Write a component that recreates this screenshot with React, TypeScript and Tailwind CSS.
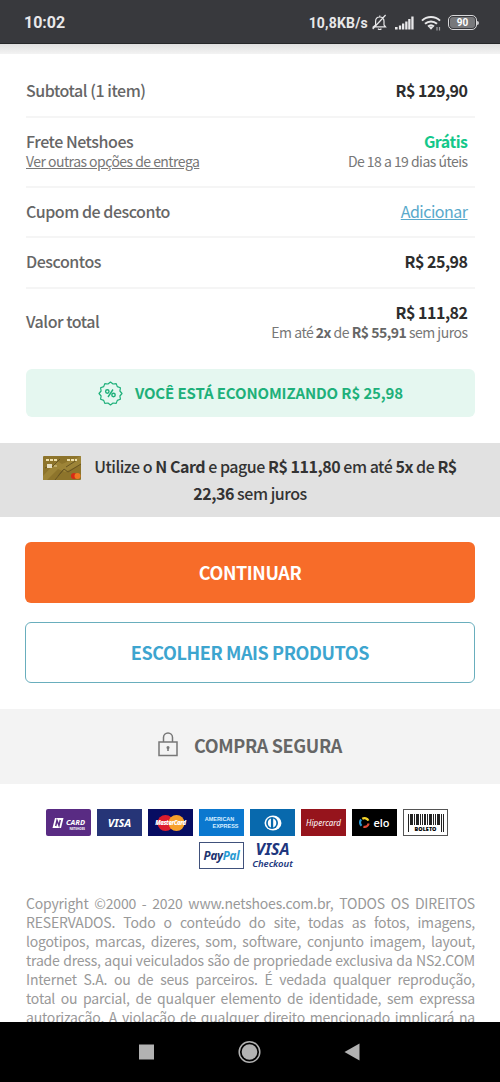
import React from 'react';

const sans = "font-['Noto_Sans_CJK_JP','Noto_Sans',sans-serif]";

const StatusBar: React.FC = () => (
  <header className="flex h-11 shrink-0 items-center justify-between border-b border-[#252729] bg-[#38393d] pl-6 pr-[21px] pt-[2px] font-[Roboto,sans-serif] text-[#e8e8ea]">
    <span className="text-base font-bold leading-none">10:02</span>
    <div className="flex items-center">
      <span className="mr-1 text-sm font-bold leading-none tracking-[0.2px]">10,8KB/s</span>
      <svg className="mr-2" width="15" height="17" viewBox="0 0 15 17" fill="none" stroke="currentColor" strokeWidth="1.2">
        <path d="M1.500 12.800h12L12 11V7.200C12 4.500 10.300 3 7.800 3S3.600 4.500 3.600 7.200V11L1.500 12.800zM7.800 3V1.500M6 14.600c.8 1.200 2.600 1.200 3.400 0M.700 15 13.600 1" />
      </svg>
      <svg className="mr-[7px]" width="19" height="14" viewBox="0 0 19 14" fill="currentColor">
        <path d="M0 11h2.600v2.500H0zM3.900 9.500h2.300v4H3.900zM7 7.500h2.300v6H7zM10.200 5.500h2.300v8h-2.300zM13.200 3h2.300v10.500h-2.300zM16.300 .500h2.300v13h-2.300z" />
      </svg>
      <svg className="mr-[7px]" width="20" height="16" viewBox="0 0 20 16" fill="none" stroke="currentColor" strokeWidth="2">
        <path d="M1 5.600c5-4.800 13-4.800 18 0M4 8.800c3.500-3.200 8.500-3.200 12 0M7 11.600c1.800-1.500 4.200-1.500 6 0" />
        <path d="m7.800 12.300 2.200 2.400 2.200-2.400c-1.200-.9-3.200-.9-4.400 0z" fill="currentColor" stroke="none" />
        <path d="M16 12v3.500M18.500 12v3.500" strokeWidth="1.200" opacity=".6" />
      </svg>
      <div className="flex items-center">
        <div className="flex h-[15px] w-[29px] items-center justify-center rounded-[5px] border-[1.500px] border-[#d8d8da] p-px">
          <span className="flex h-full w-full items-center justify-center rounded-[3px] bg-[#77787b] text-[10px] font-bold leading-none text-white">90</span>
        </div>
        <div className="h-1 w-[2px] rounded-r bg-[#c8c8ca]" />
      </div>
    </div>
  </header>
);

interface RowProps {
  label: string;
  className: string;
  note?: React.ReactNode;
  last?: boolean;
  children: React.ReactNode;
}

const Row: React.FC<RowProps> = ({ label, className, note, last, children }) => (
  <div className={`flex items-center justify-between pr-[7.500px] ${last ? '' : 'border-b-2 border-[#f5f5f5]'} ${className}`}>
    <div className={last ? 'pb-[2px]' : ''}>
      <div className="text-base font-medium leading-5 tracking-[-0.46px] text-[#666]">{label}</div>
      {note}
    </div>
    <div className="text-right text-base leading-5 tracking-[-0.5px]">{children}</div>
  </div>
);

const Summary: React.FC = () => (
  <section className="pl-[26px] pr-[25px] pt-[11px]">
    <Row label="Subtotal (1 item)" className="h-[53px] pb-[2px]">
      <b className="text-[#2d2d2d]">R$ 129,90</b>
    </Row>
    <Row
      label="Frete Netshoes"
      className="h-[70px] pb-[2px]"
      note={<a className="block text-sm leading-5 tracking-[-0.54px] text-[#777] underline">Ver outras opções de entrega</a>}
    >
      <b className="block text-[#14c88a]">Grátis</b>
      <span className="block text-sm leading-5 tracking-[-0.53px] text-[#777]">De 18 a 19 dias úteis</span>
    </Row>
    <Row label="Cupom de desconto" className="h-[50px] pb-[2px]">
      <a className="text-[#59a9cb] underline">Adicionar</a>
    </Row>
    <Row label="Descontos" className="h-[51px] pb-[4px]">
      <b className="text-[#2d2d2d]">R$ 25,98</b>
    </Row>
    <Row label="Valor total" className="h-[68px] pb-[3px]" last>
      <b className="block text-[#2d2d2d]">R$ 111,82</b>
      <span className="block text-sm leading-5 text-[#777]">
        Em até <b className="text-[#666]">2x</b> de <b className="text-[#666]">R$ 55,91</b> sem juros
      </span>
    </Row>
    <div className="mt-[12px] flex h-12 items-center justify-center rounded-md bg-[#e5f7f0] text-[#1eb07a]">
      <svg className="mr-3" width="25" height="25" viewBox="0 0 25 25" fill="none" stroke="currentColor" strokeWidth="1.200">
        <path d="M12.500 1 15 3 18.200 2.600 19.300 5.600 22.400 6.800 21.900 10 24 12.500 21.900 15 22.400 18.200 19.300 19.400 18.200 22.400 15 22 12.500 24 10 22 6.800 22.400 5.700 19.400 2.600 18.200 3.100 15 1 12.500 3.100 10 2.600 6.800 5.700 5.600 6.800 2.600 10 3z" strokeLinejoin="round" />
        <path d="M15 8.500l-5 7.500" strokeWidth="1.400" />
        <circle cx="9.300" cy="10.500" r="1.700" strokeWidth="1.400" />
        <circle cx="15.500" cy="14" r="1.700" strokeWidth="1.400" />
      </svg>
      <span className="pb-px text-[15px] font-bold leading-5 tracking-[-0.13px]">VOCÊ ESTÁ ECONOMIZANDO R$ 25,98</span>
    </div>
  </section>
);

const NCard: React.FC = () => (
  <svg className="mr-[13px] inline-block align-[-7px]" width="38" height="24" viewBox="0 0 38 24">
    <rect width="38" height="24" rx="1" fill="#8d742b" />
    <path d="M0 20 14 5l5 3L38 0v8L22 16l-7-3L4 24H0z" fill="#9d8437" />
    <path d="m12 24 9-11 4 3 13-8M8 12l9-9M23 11l11-7M2 12l7-3M15 20l5-6" stroke="#685522" fill="none" />
    <path d="M3 4h3M7 4h8M24 4h10" stroke="#eee0ae" strokeWidth="2" strokeDasharray="3 1" />
    <rect x="4" y="8" width="5" height="4" fill="#e6dec0" />
    <path d="M11 10h3" stroke="#ded098" />
    <circle cx="31" cy="20" r="3" fill="#d62b16" />
    <circle cx="34.500" cy="20" r="3" fill="#ef7821" />
  </svg>
);

const logo = 'flex h-[27px] w-[45px] items-center justify-center whitespace-nowrap leading-none';

const Payments: React.FC = () => (
  <div className="flex flex-wrap justify-center gap-x-[6px] gap-y-[6px] pl-[36px] pr-[42px] pt-[25px]">
    <div className={`${logo} gap-[2px] rounded-xs bg-[#592b83] text-white`}>
      <svg width="12" height="10" viewBox="0 0 11 10">
        <path d="M2.500 0H11L8.500 10H0z" fill="#fff" />
        <path d="M3.200 8 4.500 2.500 6.500 7.500 7.800 2" stroke="#592b83" strokeWidth="1.500" fill="none" />
      </svg>
      <div className="flex flex-col items-end pt-[3px]">
        <span className="font-['Noto_Sans',sans-serif] text-[7.500px] font-bold italic leading-[9px]">CARD</span>
        <span className="font-['Noto_Sans',sans-serif] text-[3px] font-bold leading-[4px]">NETSHOES</span>
      </div>
    </div>
    <div className={`${logo} bg-[#263577] font-['Noto_Sans',sans-serif] text-[11px] font-bold italic text-white`}>VISA</div>
    <div className={`${logo} relative bg-[#070d62]`}>
      <svg width="28" height="18" viewBox="0 0 28 18">
        <circle cx="8.500" cy="9" r="8" fill="#dc1c2c" />
        <circle cx="19.500" cy="9" r="8" fill="#f6a12b" />
      </svg>
      <span className="absolute font-['Open_Sans',sans-serif] text-[6px] font-extrabold italic tracking-[-0.400px] text-white">MasterCard</span>
    </div>
    <div className={`${logo} flex-col bg-[#0b78cf] font-['Liberation_Sans',sans-serif] text-[5.500px] font-bold text-[#d9efff]`}>
      <span className="mr-1 leading-[7px]">AMERICAN</span>
      <span className="ml-2 leading-[6px]">EXPRESS</span>
    </div>
    <div className={`${logo} bg-[#0869ad]`}>
      <svg width="18" height="16" viewBox="0 0 19 17">
        <ellipse cx="9.500" cy="8.500" rx="9" ry="8" fill="#fff" />
        <circle cx="8.500" cy="8.500" r="6.300" fill="#0869ad" />
        <path d="M7.300 3.800a5 5 0 0 0 0 9.400zM9.700 3.800a5 5 0 0 1 0 9.400z" fill="#fff" />
      </svg>
    </div>
    <div className={`${logo} bg-[#96141c] font-['Noto_Sans',sans-serif] text-[8px] italic text-white`}>Hipercard</div>
    <div className={`${logo} gap-[3px] bg-black font-['Open_Sans',sans-serif] text-[11px] font-semibold text-white`}>
      <svg width="11" height="11" viewBox="0 0 10 10" fill="none" strokeWidth="2">
        <path d="M3 1.600A4 4 0 0 1 8.600 3.300" stroke="#f5d52a" />
        <path d="M8.800 6A4 4 0 0 1 4 8.900" stroke="#df4936" />
        <path d="M2.300 8A4 4 0 0 1 2 2.300" stroke="#2998d5" />
      </svg>
      <span className="pb-px">elo</span>
    </div>
    <div className={`${logo} flex-col border border-[#555] bg-white font-['Noto_Sans',sans-serif] text-[5.500px] font-black text-black`}>
      <svg width="38" height="18" viewBox="0 0 38 18" fill="#222">
        <path d="M1 0h1v18H1zM3 0h3v11H3zM7 0h1v11H7zM9 0h3v11H9zM13 0h1v11h-1zM15 0h1v11h-1zM17 0h2v11h-2zM20 0h1v11h-1zM22 0h3v11h-3zM26 0h1v11h-1zM28 0h1v11h-1zM30 0h3v11h-3zM34 0h1v18h-1zM36 0h1v18h-1z" />
      </svg>
      <span className="-mt-[6px] leading-[6px]">BOLETO</span>
    </div>
    <div className={`${logo} border border-[#40517b] bg-white font-['Noto_Sans',sans-serif] text-[11.500px] font-bold italic tracking-[-0.2px] text-[#1d3470]`}>
      Pay<span className="text-[#299bd3]">Pal</span>
    </div>
    <div className={`${logo} flex-col font-['Noto_Sans',sans-serif] italic text-[#20367e]`}>
      <span className="text-[16px] font-bold leading-[15px]">VISA</span>
      <span className="text-[9.500px] font-semibold leading-[13px]">Checkout</span>
    </div>
  </div>
);

const legal = [
  'Copyright ©2000 - 2020 www.netshoes.com.br, TODOS OS DIREITOS',
  'RESERVADOS. Todo o conteúdo do site, todas as fotos, imagens,',
  'logotipos, marcas, dizeres, som, software, conjunto imagem, layout,',
  'trade dress, aqui veiculados são de propriedade exclusiva da NS2.COM',
  'Internet S.A. ou de seus parceiros. É vedada qualquer reprodução,',
  'total ou parcial, de qualquer elemento de identidade, sem expressa',
  'autorização. A violação de qualquer direito mencionado implicará na',
];

const App: React.FC = () => {
  return (
    <div className={`flex h-[1082px] w-[500px] flex-col overflow-hidden bg-white ${sans}`}>
      <StatusBar />
      <main className="min-h-0 flex-1 overflow-hidden">
        <div className="h-[10px] bg-linear-to-b from-[#e0e0e0] to-[#f3f3f3]" />
        <Summary />

        <section className="mt-[26px] h-[74px] bg-[#e1e1e1] px-[30px] pt-[10px] text-[#333]">
          <p className="text-center text-base font-medium leading-[26px] tracking-[-0.47px]">
            <NCard />
            Utilize o <b>N Card</b> e pague <b>R$ 111,80</b> em até <b>5x</b> de <b>R$</b>
            <br />
            <b>22,36</b> sem juros
          </p>
        </section>

        <div className="flex flex-col gap-[19px] px-[25px] pt-[25px]">
          <button className="h-[61px] rounded-md bg-[#f76c29] pb-px text-lg font-bold tracking-[-0.4px] text-white">CONTINUAR</button>
          <button className="h-[61px] rounded-md border border-[#69aebd] pb-px text-lg font-bold tracking-[-0.4px] text-[#3da5cf]">ESCOLHER MAIS PRODUTOS</button>
        </div>

        <div className="mt-[26px] flex h-[75px] items-center justify-center bg-[#f3f3f3] text-lg font-bold text-[#666]">
          <svg className="mr-4 -mt-[5px]" width="20" height="25" viewBox="0 0 20 25" fill="none" stroke="#777" strokeWidth="1.500">
            <path d="M1 10h18v13.500H1zM5.500 10V5.500a4.500 4.500 0 0 1 9 0V10" />
            <path d="M10 15v4" strokeWidth="1.600" />
            <circle cx="10" cy="15.500" r=".8" fill="#777" />
          </svg>
          <span className="pb-[4px] tracking-[-0.35px]">COMPRA SEGURA</span>
        </div>

        <Payments />

        <div className="pl-[26px] pr-[25px] pt-[25px] text-sm leading-[19px] tracking-[-0.2px] text-[#999]">
          {legal.map((line) => (
            <p key={line} className="whitespace-nowrap [text-align-last:justify]">{line}</p>
          ))}
        </div>
      </main>

      <nav className="flex h-[60px] shrink-0 items-center bg-black pl-[138px]">
        <svg width="222" height="24" viewBox="0 0 222 24" fill="#b2b2b2">
          <rect x="1" y="4.500" width="15" height="15" />
          <circle cx="111.500" cy="12" r="7.800" />
          <circle cx="111.500" cy="12" r="10.300" fill="none" stroke="#b2b2b2" strokeWidth="1.500" />
          <path d="M206.500 12 221.500 3.500v17z" />
        </svg>
      </nav>
    </div>
  );
};

export default App;
